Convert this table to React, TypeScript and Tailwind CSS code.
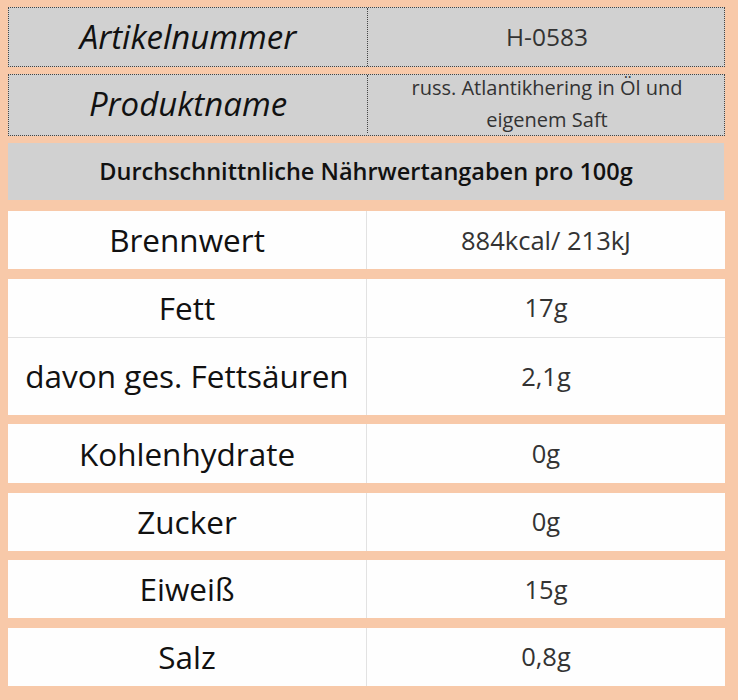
import React from "react";

const font = { fontFamily: "'Open Sans', Lato, sans-serif" };

const rows: { label: string; value: string; h: string }[][] = [
  [{ label: "Brennwert", value: "884kcal/ 213kJ", h: "h-[58px]" }],
  [
    { label: "Fett", value: "17g", h: "h-[59px]" },
    { label: "davon ges. Fettsäuren", value: "2,1g", h: "h-[77px]" },
  ],
  [{ label: "Kohlenhydrate", value: "0g", h: "h-[59px]" }],
  [{ label: "Zucker", value: "0g", h: "h-[58px]" }],
  [{ label: "Eiweiß", value: "15g", h: "h-[58px]" }],
  [{ label: "Salz", value: "0,8g", h: "h-[58px]" }],
];

const App: React.FC = () => {
  return (
    <div className="w-[738px] h-[700px] bg-[#f8c9a9] pt-[7px] pl-[8px] pr-[13px]" style={font}>
      {/* 🔹 Artikel / Produkt */}
      <div className="grid grid-cols-[359px_358px] h-[60px] bg-[#d1d1d1] border border-dotted border-[#444]">
        <div className="flex items-center justify-center border-r border-dotted border-[#444] italic text-[33px] text-[#111]">
          Artikelnummer
        </div>
        <div className="flex items-center justify-center text-[24.5px] text-[#333]">H-0583</div>
      </div>
      <div className="grid grid-cols-[359px_358px] grid-rows-[58px] h-[62px] mt-[7px] bg-[#d1d1d1] border border-dotted border-[#444]">
        <div className="flex items-center justify-center border-r border-dotted border-[#444] italic text-[33px] text-[#111]">
          Produktname
        </div>
        <div className="flex items-center justify-center text-center text-[20px] leading-[32px] text-[#333] px-8">
          russ. Atlantikhering in Öl und eigenem Saft
        </div>
      </div>

      {/* 🔹 Header */}
      <div className="mt-[7px] h-[57px] w-[716px] bg-[#d1d1d1] flex items-center justify-center font-semibold text-[23.5px] text-[#111]">
        Durchschnittnliche Nährwertangaben pro 100g
      </div>

      {/* 🔹 Nährwerte */}
      <div className="mt-[11px] flex flex-col gap-[9.5px]">
        {rows.map((group, i) => (
          <div key={i} className="bg-[#fefefe] flex flex-col divide-y divide-[#e2e2e2]">
            {group.map((r) => (
              <div key={r.label} className={`grid grid-cols-[359px_358px] ${r.h}`}>
                <div className="flex items-center justify-center border-r border-[#e2e2e2] text-[31.5px] text-[#111]">
                  {r.label}
                </div>
                <div className="flex items-center justify-center text-[25.5px] text-[#333]">{r.value}</div>
              </div>
            ))}
          </div>
        ))}
      </div>
    </div>
  );
};

export default App;
